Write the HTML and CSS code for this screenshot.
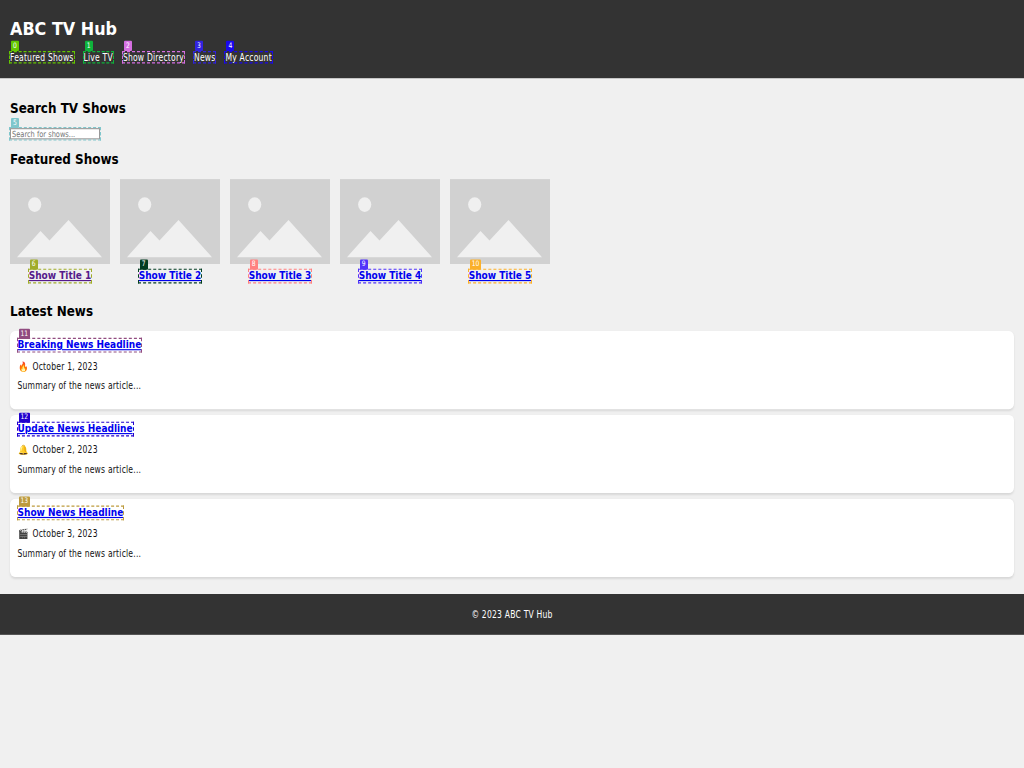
FILE: index.html
```html
<!DOCTYPE html>
<html lang="en">
<head>
<meta charset="utf-8">
<title>ABC TV Hub</title>
<link rel="stylesheet" href="styles.css">
</head>
<body>
<svg class="defs"><symbol id="picture" viewBox="0 0 100 85" preserveAspectRatio="none"><rect width="100" height="85" fill="#d1d1d1"/><ellipse cx="24.7" cy="25.5" rx="6.6" ry="7.3" fill="#f0f0f0"/><path d="M7 78L30.5 52L39.5 61.5L58.5 41L92 78Z" fill="#f0f0f0"/></symbol></svg>
<div class="page">
<header class="header">
  <h1>ABC TV Hub</h1>
  <nav class="nav">
    <a class="mark c0"><b class="tag">0</b>Featured Shows</a>
    <a class="mark c1"><b class="tag">1</b>Live TV</a>
    <a class="mark c2"><b class="tag">2</b>Show Directory</a>
    <a class="mark c3"><b class="tag">3</b>News</a>
    <a class="mark c4"><b class="tag">4</b>My Account</a>
  </nav>
</header>
<main class="main">
  <h2>Search TV Shows</h2>
  <div class="search mark c5"><b class="tag">5</b><input type="text" placeholder="Search for shows..."></div>
  <h2 class="featured">Featured Shows</h2>
  <div class="shows">
    <div class="show"><svg><use href="#picture"/></svg><a class="mark link visited c6"><b class="tag">6</b>Show Title 1</a></div>
    <div class="show"><svg><use href="#picture"/></svg><a class="mark link c7"><b class="tag">7</b>Show Title 2</a></div>
    <div class="show"><svg><use href="#picture"/></svg><a class="mark link c8"><b class="tag">8</b>Show Title 3</a></div>
    <div class="show"><svg><use href="#picture"/></svg><a class="mark link c9"><b class="tag">9</b>Show Title 4</a></div>
    <div class="show"><svg><use href="#picture"/></svg><a class="mark link c10"><b class="tag">10</b>Show Title 5</a></div>
  </div>
  <h2 class="latest">Latest News</h2>
  <div class="news">
    <article class="card"><a class="mark link c11"><b class="tag">11</b>Breaking News Headline</a><p><span class="emoji">🔥</span>October 1, 2023</p><p>Summary of the news article...</p></article>
    <article class="card"><a class="mark link c12"><b class="tag">12</b>Update News Headline</a><p><span class="emoji">🔔</span>October 2, 2023</p><p>Summary of the news article...</p></article>
    <article class="card"><a class="mark link c13"><b class="tag">13</b>Show News Headline</a><p><span class="emoji">🎬</span>October 3, 2023</p><p>Summary of the news article...</p></article>
  </div>
</main>
<footer class="footer">© 2023 ABC TV Hub</footer>
</div>
</body>
</html>
```
FILE: styles.css
```css
* { box-sizing: border-box; }
html { background: #f0f0f0; }
body { margin: 0; }
.page { width: 2048px; height: 1354px; zoom: .5; transform: scaleY(1.1336); transform-origin: 0 0; background: #f0f0f0; color: #111; font: 17px/19px "DejaVu Sans Condensed", "DejaVu Sans", sans-serif; letter-spacing: .4px; }
.defs { display: block; width: 0; height: 0; }
h1, h2, p { margin: 0; }
.header { height: 137px; padding: 33px 20px 0; background: #333; color: #fff; }
h1 { font-family: "DejaVu Sans", sans-serif; font-size: 32px; line-height: 37px; letter-spacing: 0; }
.nav { display: flex; margin-top: 21px; gap: 20px; }
.mark { --mark: #333; position: relative; white-space: nowrap; outline: 2px dashed var(--mark); }
.nav .mark { height: 19px; line-height: 22px; }
.tag { position: absolute; z-index: 1; top: -19px; left: 2px; min-width: 16px; height: 18px; padding: 0 4px; background: var(--mark); color: #fff; font-size: 13.3px; font-weight: 400; line-height: 18px; text-align: center; border-radius: 2px; letter-spacing: 0; }
.nav .tag { line-height: 18px; }
.main { height: 911px; padding: 40px 20px 0; }
h2 { font-family: "DejaVu Sans", sans-serif; font-size: 24px; line-height: 28px; color: #000; letter-spacing: 0; }
.search { width: 179px; height: 20px; margin-top: 21px; }
.search input { display: block; width: 179px; height: 20px; padding: 0 2px; border: 2px solid #999; background: #fff; font: 14.8px/16px "DejaVu Sans Condensed", "DejaVu Sans", sans-serif; }
.search input::placeholder { color: #757575; }
.featured { margin-top: 21px; }
.shows { display: flex; gap: 20px; margin-top: 21px; }
.show { display: flex; flex-direction: column; align-items: center; width: 200px; }
.show svg { display: block; width: 200px; height: 150px; }
.show .mark { margin-top: 10px; }
.link { display: block; width: max-content; color: #0000ee; font-family: "DejaVu Sans", sans-serif; font-size: 18px; font-weight: 700; line-height: 21px; text-decoration: underline; letter-spacing: 0; }
.link .tag { font-family: "DejaVu Sans Condensed", "DejaVu Sans", sans-serif; }
.visited { color: #551a8b; }
.latest { margin-top: 38px; }
.news { display: grid; gap: 10px; margin-top: 20px; }
.card { height: 138px; padding: 15px; background: #fff; border-radius: 10px; box-shadow: 0 2px 4px rgba(0,0,0,.1); }
.card p { margin-top: 16px; height: 19px; line-height: 22px; }
.emoji { display: inline-block; width: 30px; font-size: 17px; }
.footer { height: 71px; background: #333; color: #fff; line-height: 73px; text-align: center; }
.c0 { --mark: #64c800; }
.c1 { --mark: #0eb33b; }
.c2 { --mark: #d66fe2; }
.c3 { --mark: #3022df; }
.c4 { --mark: #1908ed; }
.c5 { --mark: #7fc6cc; }
.c6 { --mark: #a0ac2a; }
.c7 { --mark: #033d22; }
.c8 { --mark: #ff8080; }
.c9 { --mark: #5033fa; }
.c10 { --mark: #fbb02a; }
.c11 { --mark: #914c80; }
.c12 { --mark: #2100cd; }
.c13 { --mark: #bd9b3d; }
```
